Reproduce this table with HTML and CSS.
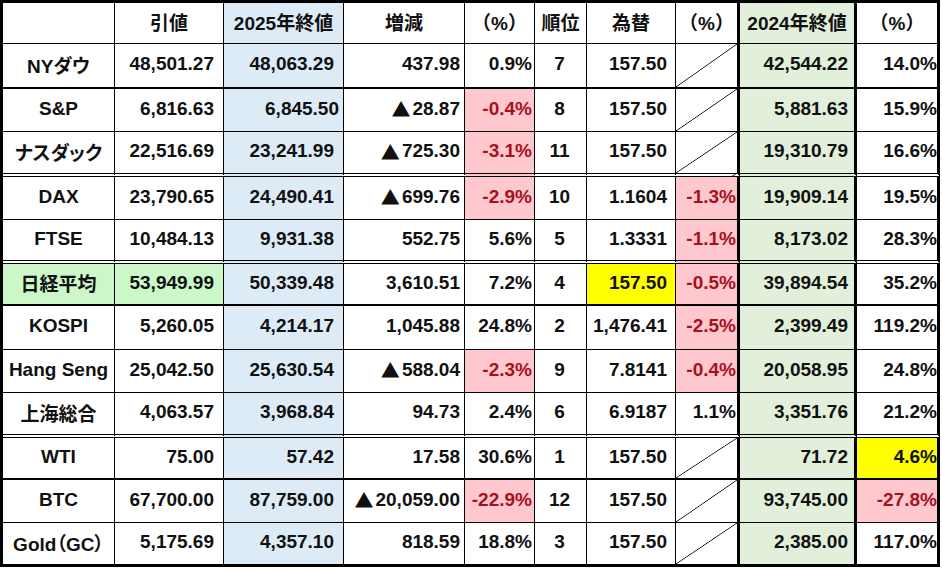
FILE: index.html
```html
<!DOCTYPE html>
<html lang="ja">
<head>
<meta charset="utf-8">
<title>株価指数 比較表</title>
<link rel="stylesheet" href="styles.css">
</head>
<body>
<div class="sheet">
  <div class="row head">
    <div class="cell c1"></div>
    <div class="cell c2">引値</div>
    <div class="cell c3 blue">2025年終値</div>
    <div class="cell c4">増減</div>
    <div class="cell c5">（%）</div>
    <div class="cell c6">順位</div>
    <div class="cell c7">為替</div>
    <div class="cell c8">（%）</div>
    <div class="cell c9 green">2024年終値</div>
    <div class="cell c10">（%）</div>
  </div>
  <div class="row thick">
    <div class="cell c1">NYダウ</div>
    <div class="cell c2">48,501.27</div>
    <div class="cell c3 blue">48,063.29</div>
    <div class="cell c4">437.98</div>
    <div class="cell c5">0.9%</div>
    <div class="cell c6">7</div>
    <div class="cell c7">157.50</div>
    <div class="cell c8 diag"></div>
    <div class="cell c9 green">42,544.22</div>
    <div class="cell c10">14.0%</div>
  </div>
  <div class="row">
    <div class="cell c1">S&amp;P</div>
    <div class="cell c2">6,816.63</div>
    <div class="cell c3 blue nudge">6,845.50</div>
    <div class="cell c4"><span class="tri">▲</span>28.87</div>
    <div class="cell c5 bad">-0.4%</div>
    <div class="cell c6">8</div>
    <div class="cell c7">157.50</div>
    <div class="cell c8 diag"></div>
    <div class="cell c9 green">5,881.63</div>
    <div class="cell c10">15.9%</div>
  </div>
  <div class="row double">
    <div class="cell c1">ナスダック</div>
    <div class="cell c2">22,516.69</div>
    <div class="cell c3 blue">23,241.99</div>
    <div class="cell c4"><span class="tri">▲</span>725.30</div>
    <div class="cell c5 bad">-3.1%</div>
    <div class="cell c6">11</div>
    <div class="cell c7">157.50</div>
    <div class="cell c8 diag"></div>
    <div class="cell c9 green">19,310.79</div>
    <div class="cell c10">16.6%</div>
  </div>
  <div class="row">
    <div class="cell c1">DAX</div>
    <div class="cell c2">23,790.65</div>
    <div class="cell c3 blue">24,490.41</div>
    <div class="cell c4"><span class="tri">▲</span>699.76</div>
    <div class="cell c5 bad">-2.9%</div>
    <div class="cell c6">10</div>
    <div class="cell c7">1.1604</div>
    <div class="cell c8 bad">-1.3%</div>
    <div class="cell c9 green">19,909.14</div>
    <div class="cell c10">19.5%</div>
  </div>
  <div class="row double">
    <div class="cell c1">FTSE</div>
    <div class="cell c2">10,484.13</div>
    <div class="cell c3 blue">9,931.38</div>
    <div class="cell c4">552.75</div>
    <div class="cell c5">5.6%</div>
    <div class="cell c6">5</div>
    <div class="cell c7">1.3331</div>
    <div class="cell c8 bad">-1.1%</div>
    <div class="cell c9 green">8,173.02</div>
    <div class="cell c10">28.3%</div>
  </div>
  <div class="row thick">
    <div class="cell c1 mint">日経平均</div>
    <div class="cell c2 mint">53,949.99</div>
    <div class="cell c3 blue">50,339.48</div>
    <div class="cell c4">3,610.51</div>
    <div class="cell c5">7.2%</div>
    <div class="cell c6">4</div>
    <div class="cell c7 yellow">157.50</div>
    <div class="cell c8 bad">-0.5%</div>
    <div class="cell c9 green">39,894.54</div>
    <div class="cell c10">35.2%</div>
  </div>
  <div class="row">
    <div class="cell c1">KOSPI</div>
    <div class="cell c2">5,260.05</div>
    <div class="cell c3 blue">4,214.17</div>
    <div class="cell c4">1,045.88</div>
    <div class="cell c5">24.8%</div>
    <div class="cell c6">2</div>
    <div class="cell c7">1,476.41</div>
    <div class="cell c8 bad">-2.5%</div>
    <div class="cell c9 green">2,399.49</div>
    <div class="cell c10">119.2%</div>
  </div>
  <div class="row">
    <div class="cell c1">Hang Seng</div>
    <div class="cell c2">25,042.50</div>
    <div class="cell c3 blue">25,630.54</div>
    <div class="cell c4"><span class="tri">▲</span>588.04</div>
    <div class="cell c5 bad">-2.3%</div>
    <div class="cell c6">9</div>
    <div class="cell c7">7.8141</div>
    <div class="cell c8 bad">-0.4%</div>
    <div class="cell c9 green">20,058.95</div>
    <div class="cell c10">24.8%</div>
  </div>
  <div class="row double">
    <div class="cell c1">上海総合</div>
    <div class="cell c2">4,063.57</div>
    <div class="cell c3 blue">3,968.84</div>
    <div class="cell c4">94.73</div>
    <div class="cell c5">2.4%</div>
    <div class="cell c6">6</div>
    <div class="cell c7">6.9187</div>
    <div class="cell c8">1.1%</div>
    <div class="cell c9 green">3,351.76</div>
    <div class="cell c10">21.2%</div>
  </div>
  <div class="row thick">
    <div class="cell c1">WTI</div>
    <div class="cell c2">75.00</div>
    <div class="cell c3 blue">57.42</div>
    <div class="cell c4">17.58</div>
    <div class="cell c5">30.6%</div>
    <div class="cell c6">1</div>
    <div class="cell c7">157.50</div>
    <div class="cell c8 diag"></div>
    <div class="cell c9 green">71.72</div>
    <div class="cell c10 yellow">4.6%</div>
  </div>
  <div class="row">
    <div class="cell c1">BTC</div>
    <div class="cell c2">67,700.00</div>
    <div class="cell c3 blue">87,759.00</div>
    <div class="cell c4"><span class="tri">▲</span>20,059.00</div>
    <div class="cell c5 bad">-22.9%</div>
    <div class="cell c6">12</div>
    <div class="cell c7">157.50</div>
    <div class="cell c8 diag"></div>
    <div class="cell c9 green">93,745.00</div>
    <div class="cell c10 bad">-27.8%</div>
  </div>
  <div class="row last">
    <div class="cell c1">Gold（GC）</div>
    <div class="cell c2">5,175.69</div>
    <div class="cell c3 blue">4,357.10</div>
    <div class="cell c4">818.59</div>
    <div class="cell c5">18.8%</div>
    <div class="cell c6">3</div>
    <div class="cell c7">157.50</div>
    <div class="cell c8 diag"></div>
    <div class="cell c9 green">2,385.00</div>
    <div class="cell c10">117.0%</div>
  </div>
</div>
</body>
</html>
```
FILE: styles.css
```css
html, body {
  margin: 0;
  padding: 0;
  background: #fff;
}

.sheet {
  display: grid;
  grid-template-columns: 112px 109px 120px 121px 70px 52px 89px 64px 117px 83px;
  grid-template-rows: 41px 45px 43px 45px 43px 44px 42px 44px 43px 45px 42px 43px 44px;
  width: max-content;
  border-left: 3px solid #000;
  border-top: 3px solid #000;
  font-family: "Liberation Sans", "Noto Sans CJK JP", sans-serif;
  font-weight: 700;
  font-size: 19px;
  color: #111;
}

.row {
  display: contents;
}

.cell {
  box-sizing: border-box;
  display: flex;
  align-items: center;
  justify-content: flex-end;
  padding-bottom: 3px;
  border-right: 1px solid #000;
  border-bottom: 1px solid #000;
  white-space: nowrap;
  overflow: hidden;
  background: #fff;
}

.row.thick .cell { border-bottom-width: 2px; }
.row.double .cell { border-bottom: 4px double #000; }
.row.last .cell { border-bottom-width: 3px; }

.c1 {
  justify-content: center;
  font-feature-settings: "palt";
}
.c2 { padding-right: 9px; }
.c3 { padding-right: 9px; }
.c3.nudge { padding-right: 4px; }
.c4 { padding-right: 4px; }
.c5 { padding-right: 2px; }
.c6 { justify-content: center; padding-right: 2px; }
.c7 { padding-right: 8px; }
.c8 { padding-right: 1px; border-right-width: 3px; }
.c9 { padding-right: 6px; border-right-width: 3px; }
.c10 { padding-right: 0; border-right-width: 3px; }

.head .cell {
  justify-content: center;
  padding-right: 0;
}

.tri {
  font-family: "Noto Sans CJK JP", sans-serif;
  font-weight: 400;
  margin-right: 2px;
}

.blue { background: #ddebf7; }
.green { background: #e2efda; }
.mint { background: #ccf7c8; }
.yellow { background: #ffff00; }
.bad {
  background: #ffc7ce;
  color: #a8101c;
}

.diag {
  background: linear-gradient(to bottom right,
    transparent calc(50% - 0.7px),
    #000 50%,
    transparent calc(50% + 0.7px));
}
```
